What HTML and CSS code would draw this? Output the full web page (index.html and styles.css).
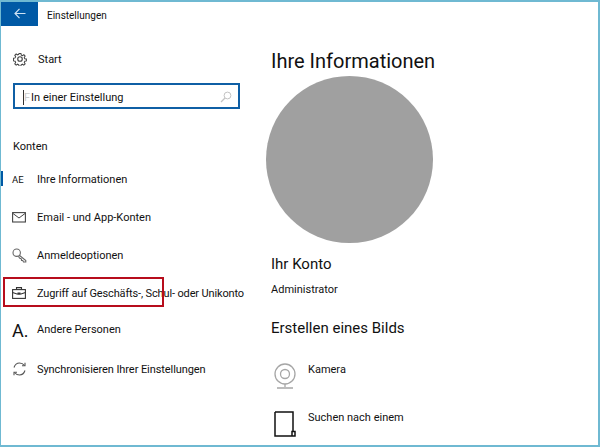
FILE: index.html
```html
<!DOCTYPE html>
<html>
<head>
    <title>Einstellungen</title>
    <link rel="stylesheet" href="styles.css">
</head>
<body>

<div class="window">
    <div class="titlebar">
        <div class="back-button">
            <svg width="12" height="11" viewBox="0 0 12 11"><path d="M5.500 .8 1 5.500 5.500 10.200M1 5.500H11.500" fill="none" stroke="#cfe2f3" stroke-width="1.200"/></svg>
        </div>
        <div class="title">Einstellungen</div>
    </div>

    <div class="content">
        <div class="sidebar">
            <div class="start-row">
                <svg class="icon" width="14" height="14" viewBox="0 0 16 16"><g fill="none" stroke="#444" stroke-width="1.300"><circle cx="8" cy="8" r="2.600"/><path d="M6.800 1h2.400l.4 2 1.500.7 1.800-1.100 1.600 1.700-1.100 1.700.7 1.600 2 .4v2.400l-2 .4-.7 1.500 1.100 1.800-1.700 1.600-1.700-1.100-1.600.7-.4 2H6.800l-.4-2-1.600-.7-1.700 1.100-1.700-1.600 1.100-1.800-.7-1.500-2-.4V7l2-.4.7-1.600-1.100-1.700 1.700-1.700 1.700 1.100 1.600-.7z" transform="translate(.8 .8) scale(.9)"/></g></svg>
                <span>Start</span>
            </div>

            <div class="search-box">
                <span class="caret"></span>
                <span class="search-hint">F</span>
                <span class="search-text">In einer Einstellung</span>
                <svg class="search-icon" width="12" height="12" viewBox="0 0 12 12"><circle cx="7.500" cy="4.500" r="3.400" fill="none" stroke="#c4c4c4"/><path d="M5 7 1 11" stroke="#c4c4c4" stroke-width="1.200"/></svg>
            </div>

            <div class="section-label">Konten</div>

            <div class="nav-item active">
                <span class="nav-icon initials">AE</span>
                <span>Ihre Informationen</span>
            </div>
            <div class="nav-item">
                <svg class="nav-icon" width="14" height="11" viewBox="0 0 14 11"><rect x=".6" y=".6" width="12.800" height="9.400" fill="none" stroke="#444" stroke-width="1.100"/><path d="M1 1.500 7 6l6-4.500" fill="none" stroke="#444"/></svg>
                <span>Email - und App-Konten</span>
            </div>
            <div class="nav-item">
                <svg class="nav-icon" width="15" height="15" viewBox="0 0 15 15"><g fill="none" stroke="#666" stroke-width="1.100"><circle cx="4.700" cy="4.700" r="3.700"/><path d="M7.300 7.300 13.800 12.500V14H11.500L10.800 12.500H9.500V11L7.500 10 6.500 8.200"/></g></svg>
                <span>Anmeldeoptionen</span>
            </div>
            <div class="nav-item highlighted">
                <svg class="nav-icon" width="14" height="12" viewBox="0 0 14 12"><g fill="none" stroke="#333" stroke-width="1.100"><rect x=".6" y="2.600" width="12.800" height="8.800"/><path d="M4.500 2.500V.6h5v1.900M.6 5.500 5 7h4l4.400-1.500"/></g><rect x="5.500" y="5.500" width="3" height="2" fill="#333"/></svg>
                <span class="tight">Zugriff auf Geschäfts-, Schul- oder Unikonto</span>
                <div class="red-frame"></div>
            </div>
            <div class="nav-item people">
                <span class="nav-icon letter">A.</span>
                <span>Andere Personen</span>
            </div>
            <div class="nav-item">
                <svg class="nav-icon" width="15" height="14" viewBox="0 0 15 14"><g fill="none" stroke="#555" stroke-width="1.100"><path d="M2 5.500C3 2.500 5 1 7.500 1c2 0 3.800 1 5 2.500"/><path d="M13 8.500C12 11.500 10 13 7.500 13c-2 0-3.800-1-5-2.500"/><path d="M13 .8v3H10M2 13.200v-3h3"/></g></svg>
                <span class="snug">Synchronisieren Ihrer Einstellungen</span>
            </div>
        </div>

        <div class="main">
            <h1>Ihre Informationen</h1>
            <div class="avatar"></div>
            <h2 class="account-heading">Ihr Konto</h2>
            <div class="account-name">Administrator</div>
            <h2 class="picture-heading">Erstellen eines Bilds</h2>
            <div class="picture-option first">
                <svg width="22" height="26" viewBox="0 0 22 26"><g fill="none" stroke="#a6a6a6" stroke-width="1.300"><circle cx="11" cy="11" r="10"/><circle cx="11" cy="11" r="4.500"/><path d="M11 21v3M3 25h16"/></g></svg>
                <span>Kamera</span>
            </div>
            <div class="picture-option">
                <svg width="22" height="26" viewBox="0 0 22 26"><path d="M1 1H19V20M18 25H1V1M18 20.500h3V25H18z" fill="none" stroke="#111" stroke-width="1.500"/></svg>
                <span>Suchen nach einem</span>
            </div>
        </div>
    </div>
</div>

</body>
</html>
```

FILE: styles.css
```css
html, body {
    margin: 0;
    padding: 0;
}

body {
    font-family: Roboto, 'Noto Sans', sans-serif;
    font-size: 11px;
    color: #111;
    background: #fff;
}

h1, h2 {
    margin: 0;
    font-weight: normal;
}

.window {
    box-sizing: border-box;
    width: 600px;
    height: 447px;
    overflow: hidden;
    border: solid #6fb9d2;
    border-width: 2px 2px 2px 1px;
}

.titlebar {
    display: flex;
    align-items: center;
    height: 24px;
}

.back-button {
    display: flex;
    align-items: center;
    justify-content: center;
    width: 37px;
    height: 24px;
    padding-bottom: 2px;
    box-sizing: border-box;
    background: #0059a5;
}

.title {
    margin: 2px 0 0 9px;
    font-size: 10px;
}

.content {
    display: flex;
}

/* left column */
.sidebar {
    width: 270px;
    flex: none;
}

.start-row {
    display: flex;
    align-items: center;
    height: 20px;
    margin-top: 23px;
    padding-left: 12px;
}

.start-row span {
    margin-left: 11px;
}

.search-box {
    display: flex;
    align-items: center;
    box-sizing: border-box;
    width: 227px;
    height: 26px;
    margin: 14px 0 0 12px;
    padding: 2px 6px 0 8px;
    border: 2px solid #0f5fa5;
}

.caret {
    width: 1px;
    height: 15px;
    background: #333;
}

.search-hint {
    color: #ccc;
}

.search-text {
    margin-left: 1px;
    flex: 1;
}

.section-label {
    margin: 31px 0 4px 12px;
    height: 16px;
}

.nav-item {
    position: relative;
    display: flex;
    align-items: center;
    height: 38px;
    padding-left: 11px;
    white-space: nowrap;
}

.nav-item > span:last-of-type {
    position: absolute;
    left: 36px;
}

.nav-icon {
    display: block;
}

.initials {
    font-size: 9.500px;
}

.letter {
    font-size: 18px;
    line-height: 20px;
    margin-top: 3px;
}

.tight {
    letter-spacing: -0.14px;
}

.snug {
    letter-spacing: -0.08px;
}

.nav-item.active::before {
    content: "";
    position: absolute;
    left: 0;
    top: 11px;
    width: 2px;
    height: 15px;
    background: #0059a5;
}

.nav-item.people {
    height: 34px;
    margin-bottom: 4px;
}

.red-frame {
    position: absolute;
    left: 2px;
    top: 3px;
    width: 161px;
    height: 30px;
    box-sizing: border-box;
    border: 2px solid #b70d1c;
}

/* right column */
.main {
    flex: 1;
}

.main h1 {
    margin-top: 22px;
    font-size: 20px;
    line-height: 26px;
}

.avatar {
    width: 167px;
    height: 167px;
    margin: 2px 0 0 -5px;
    border-radius: 50%;
    background: #a0a0a0;
}

.account-heading {
    margin-top: 11px;
    font-size: 15px;
    line-height: 20px;
}

.account-name {
    margin-top: 9px;
    line-height: 14px;
}

.picture-heading {
    margin-top: 21px;
    font-size: 15px;
    line-height: 20px;
}

.picture-option {
    display: flex;
    align-items: flex-start;
    margin: 22px 0 0 3px;
    height: 26px;
}

.picture-option.first {
    margin-top: 25px;
}

.picture-option span {
    margin-left: 12px;
    line-height: 14px;
}
```
